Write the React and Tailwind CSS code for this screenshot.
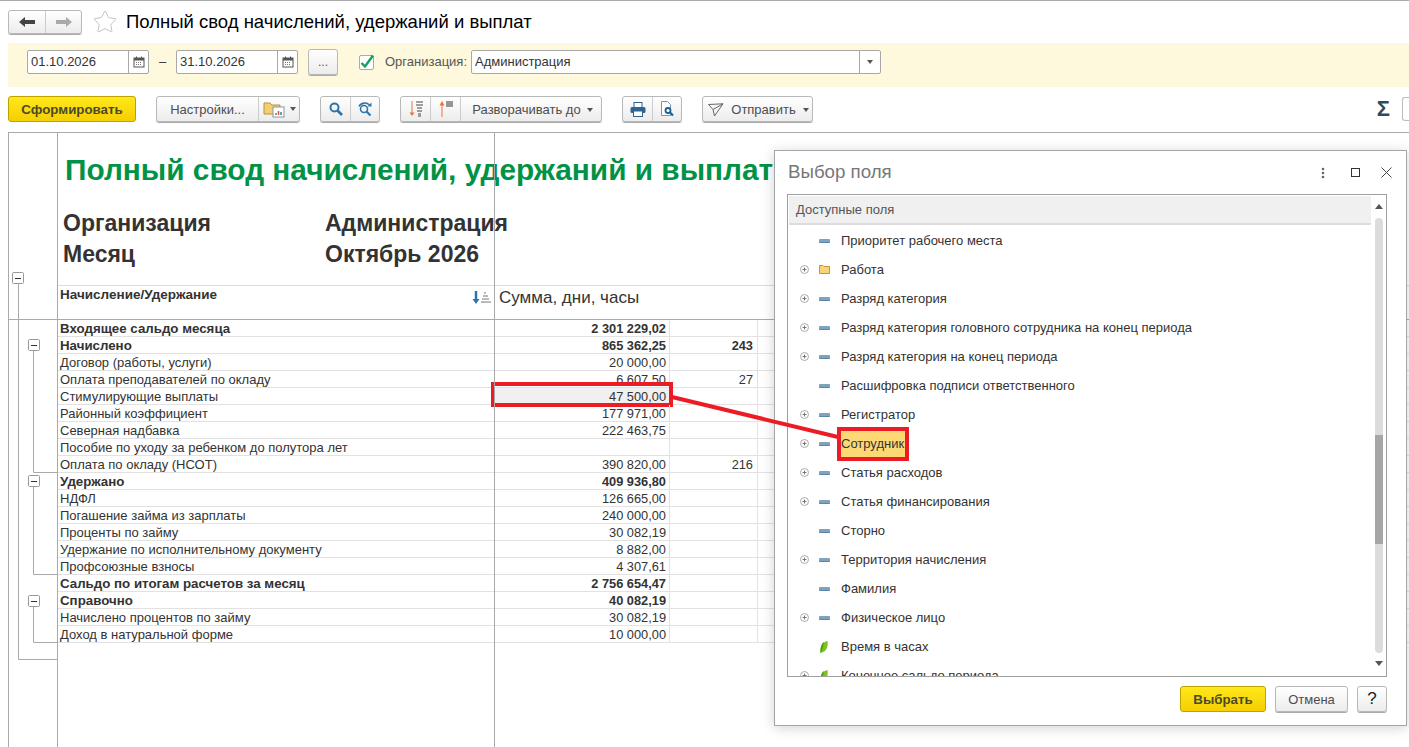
import React from 'react';
import { Star } from 'lucide-react';

const rows = [
  { name: 'Входящее сальдо месяца', sum: '2 301 229,02', bold: true },
  { name: 'Начислено', sum: '865 362,25', days: '243', bold: true },
  { name: 'Договор (работы, услуги)', sum: '20 000,00' },
  { name: 'Оплата преподавателей по окладу', sum: '6 607,50', days: '27' },
  { name: 'Стимулирующие выплаты', sum: '47 500,00', marked: true },
  { name: 'Районный коэффициент', sum: '177 971,00' },
  { name: 'Северная надбавка', sum: '222 463,75' },
  { name: 'Пособие по уходу за ребенком до полутора лет', sum: '' },
  { name: 'Оплата по окладу (НСОТ)', sum: '390 820,00', days: '216' },
  { name: 'Удержано', sum: '409 936,80', bold: true },
  { name: 'НДФЛ', sum: '126 665,00' },
  { name: 'Погашение займа из зарплаты', sum: '240 000,00' },
  { name: 'Проценты по займу', sum: '30 082,19' },
  { name: 'Удержание по исполнительному документу', sum: '8 882,00' },
  { name: 'Профсоюзные взносы', sum: '4 307,61' },
  { name: 'Сальдо по итогам расчетов за месяц', sum: '2 756 654,47', bold: true },
  { name: 'Справочно', sum: '40 082,19', bold: true },
  { name: 'Начислено процентов по займу', sum: '30 082,19' },
  { name: 'Доход в натуральной форме', sum: '10 000,00' },
];

const fields = [
  { name: 'Приоритет рабочего места', icon: 'dash' },
  { name: 'Работа', icon: 'folder', plus: true },
  { name: 'Разряд категория', icon: 'dash', plus: true },
  { name: 'Разряд категория головного сотрудника на конец периода', icon: 'dash', plus: true },
  { name: 'Разряд категория на конец периода', icon: 'dash', plus: true },
  { name: 'Расшифровка подписи ответственного', icon: 'dash' },
  { name: 'Регистратор', icon: 'dash', plus: true },
  { name: 'Сотрудник', icon: 'dash', plus: true, selected: true },
  { name: 'Статья расходов', icon: 'dash', plus: true },
  { name: 'Статья финансирования', icon: 'dash', plus: true },
  { name: 'Сторно', icon: 'dash' },
  { name: 'Территория начисления', icon: 'dash', plus: true },
  { name: 'Фамилия', icon: 'dash' },
  { name: 'Физическое лицо', icon: 'dash', plus: true },
  { name: 'Время в часах', icon: 'leaf' },
  { name: 'Конечное сальдо периода', icon: 'leaf', plus: true },
];

const btn = 'flex items-center justify-center border border-[#b8b8b8] rounded-[3px] bg-linear-to-b from-white to-[#ececec] shadow-[0_1px_0_#aaa] text-[#4d4d4d] text-[13px]';
const yellowBtn = 'flex items-center justify-center pt-[2px] border border-[#bfa200] rounded-[3px] bg-linear-to-b from-[#ffe81a] to-[#f5cf00] font-bold text-[#4a4a2a] text-[13.3px]';

function Caret() {
  return <span className="w-0 h-0 border-x-[3.5px] border-x-transparent border-t-[4px] border-t-[#555]" />;
}

function Calendar() {
  return (
    <svg width="12" height="12" viewBox="0 0 12 12">
      <rect x="1" y="2" width="10" height="9" fill="none" stroke="#555" />
      <rect x="1" y="2" width="10" height="2.5" fill="#555" />
      <path d="M3.5 0.5v3M8.5 0.5v3" stroke="#555" />
      <path d="M3 6.5h6M3 8.5h6" stroke="#777" strokeDasharray="1 1" />
    </svg>
  );
}

function DateField({ value }) {
  return (
    <div className="flex w-[122px] h-[24px] border border-[#a8a8a8] rounded-[2px] bg-white">
      <div className="flex-1 pl-[3px] text-[13px] leading-[22px] text-[#333]">{value}</div>
      <div className="w-[20px] border-l border-[#a8a8a8] flex items-center justify-center"><Calendar /></div>
    </div>
  );
}

function FolderReport() {
  return (
    <svg width="24" height="18" viewBox="0 0 24 18">
      <path d="M1 3h6l2 2h8v9H1z" fill="#f3cf72" stroke="#b8923a" />
      <rect x="10" y="7" width="11" height="10" fill="#fff" stroke="#8a9aa6" />
      <path d="M13 15v-2" stroke="#3a9a4a" strokeWidth="1.5" />
      <path d="M15.500 15v-4" stroke="#d0503a" strokeWidth="1.5" />
      <path d="M18 15v-3" stroke="#3a7ab0" strokeWidth="1.5" />
    </svg>
  );
}

function SortDown() {
  return (
    <svg width="16" height="18" viewBox="0 0 16 18">
      <path d="M4 1v14" stroke="#e8743a" />
      <path d="M1.500 12.500L4 16l2.500-3.500z" fill="#e8743a" />
      <path d="M8 2h7M8 5h7M9 8h5M9 11h5M10 14h3M10 16h3" stroke="#444" />
    </svg>
  );
}

function SortUp() {
  return (
    <svg width="16" height="18" viewBox="0 0 16 18">
      <path d="M4 3v14" stroke="#e8743a" />
      <path d="M1.500 5.500L4 1l2.500 4.500z" fill="#e8743a" />
      <path d="M8 2h7M8 4h7M8 6h7" stroke="#333" />
    </svg>
  );
}

function SearchBlue() {
  return (
    <svg width="14" height="14" viewBox="0 0 14 14" fill="none" stroke="#2f74a8" strokeWidth="2">
      <circle cx="5.500" cy="5.500" r="4" />
      <path d="M8.500 8.500L13 13" strokeWidth="2.600" />
    </svg>
  );
}

function RefreshSearch() {
  return (
    <svg width="16" height="16" viewBox="0 0 16 16" fill="none" stroke="#2f74a8" strokeWidth="1.6">
      <circle cx="7" cy="8" r="3.500" />
      <path d="M9.500 10.500L13.500 14.500" strokeWidth="2.200" />
      <path d="M2 5.500C4 1.500 9.500 1 12.500 4" />
      <path d="M14.500 1.500v4h-4z" fill="#2f74a8" stroke="none" />
    </svg>
  );
}

function PrinterFilled() {
  return (
    <svg width="16" height="15" viewBox="0 0 16 15">
      <rect x="4" y="0.500" width="8" height="5" fill="#fff" stroke="#2f648f" />
      <rect x="0.500" y="5" width="15" height="6" rx="1.500" fill="#2f648f" />
      <rect x="3.500" y="9" width="9" height="5.500" fill="#fff" stroke="#2f648f" />
    </svg>
  );
}

function PreviewDoc() {
  return (
    <svg width="15" height="16" viewBox="0 0 15 16" fill="none">
      <path d="M1.500 0.500h6l3 3v11h-9z" fill="#fff" stroke="#6a9ac0" />
      <circle cx="8" cy="9.500" r="2.500" stroke="#1f5f8f" strokeWidth="1.800" />
      <path d="M10 11.500l3 3" stroke="#1f5f8f" strokeWidth="2.200" />
    </svg>
  );
}

function Plane() {
  return (
    <svg width="16" height="14" viewBox="0 0 16 14" fill="none" stroke="#666">
      <path d="M0.500 1.500L15 0.800 6.500 13 5 6.500zM5 6.500L15 0.800" />
    </svg>
  );
}

function OutlineTree() {
  const box = (x, y) => (
    <g key={`${x}-${y}`}>
      <rect x={x + 0.5} y={y + 0.5} width="11" height="11" rx="1" fill="#fff" stroke="#999" />
      <path d={`M${x + 3} ${y + 6.500}h6`} stroke="#333" />
    </g>
  );
  return (
    <svg width="48" height="614" viewBox="9 133 48 614" className="block">
      <path d="M9 319.500H57" stroke="#aaa" />
      <path d="M18.500 284V659.500H57" fill="none" stroke="#aaa" />
      <path d="M33.500 351V472.500H57" fill="none" stroke="#aaa" />
      <path d="M33.500 487V574.500H57" fill="none" stroke="#aaa" />
      <path d="M33.500 606V642.500H57" fill="none" stroke="#aaa" />
      {box(12, 272)}
      {box(28, 339)}
      {box(28, 475)}
      {box(28, 595)}
    </svg>
  );
}

function ReportRow({ row }) {
  return (
    <div className={`flex h-[17px] border-b border-[#e2e2e2] text-[12.8px] leading-[18px] text-[#333] ${row.bold ? 'font-bold' : ''}`}>
      <div className={`w-[436px] pl-[2px] whitespace-nowrap ${row.bold ? 'text-[13.3px]' : 'text-[13px]'}`}>{row.name}</div>
      <div className={`relative w-[176px] border-r border-[#e2e2e2] pr-[3px] text-right ${row.marked ? 'bg-[#f0f0f0]' : ''}`}>
        {row.sum}
        {row.marked && <div className="absolute left-[-3px] right-[-4px] top-[-6px] h-[25px] border-4 border-[#ed1c24]" />}
      </div>
      <div className="w-[88px] border-r border-[#e2e2e2] pr-[4px] text-right">{row.days}</div>
      <div className="flex-1" />
    </div>
  );
}

function FieldIcon({ type }) {
  if (type === 'folder') {
    return (
      <svg width="11" height="9" viewBox="0 0 11 9">
        <path d="M0.500 0.500h3.500l1 1h5.500v7h-10z" fill="#f7d477" stroke="#c9962e" />
      </svg>
    );
  }
  if (type === 'leaf') {
    return (
      <svg width="8" height="12" viewBox="0 0 8 12">
        <path d="M0.500 12C0 6 2 1 7.500 0 8.500 6 6 11 0.500 12z" fill="#7cc21e" />
        <path d="M0.500 12C0 6 2 2 4 1 3 5 3 9 0.500 12z" fill="#4f9a12" />
      </svg>
    );
  }
  return <span className="block w-[11px] h-[4px] rounded-[1px] bg-[#7fa3bd] border-b border-[#5b86a6]" />;
}

function FieldRow({ field }) {
  return (
    <div className="flex items-center h-[29px] text-[13px] text-[#333] shrink-0">
      <div className="w-[25px] pl-[12px] flex items-center">
        {field.plus && (
          <svg width="9" height="9" viewBox="0 0 9 9">
            <circle cx="4.500" cy="4.500" r="4" fill="#fff" stroke="#aaa" />
            <path d="M2.500 4.500h4M4.500 2.500v4" stroke="#777" />
          </svg>
        )}
      </div>
      <div className="w-[22px] flex justify-center"><FieldIcon type={field.icon} /></div>
      {field.selected ? (
        <div className="ml-[2px] h-[34px] flex items-center w-[72px] bg-[#fdd975] border-4 border-[#ed1c24] whitespace-nowrap">{field.name}</div>
      ) : (
        <div className="ml-[6px] whitespace-nowrap">{field.name}</div>
      )}
    </div>
  );
}

function FieldDialog() {
  return (
    <div className="absolute left-[774px] top-[150px] w-[633px] h-[576px] bg-white border border-[#a6a6a6] shadow-[0_2px_12px_rgba(0,0,0,0.18)] flex flex-col">
      <div className="flex items-center h-[43px] shrink-0 pl-[13px]">
        <div className="text-[18.7px] text-[#777] flex-1">Выбор поля</div>
        <svg width="4" height="12" viewBox="0 0 4 12" fill="#666" className="mr-[26px]">
          <circle cx="2" cy="2" r="1.300" />
          <circle cx="2" cy="6" r="1.300" />
          <circle cx="2" cy="10" r="1.300" />
        </svg>
        <span className="block w-[9px] h-[9px] border border-[#333] mr-[21px]" />
        <svg width="11" height="11" viewBox="0 0 11 11" stroke="#444" className="mr-[14px]">
          <path d="M0.500 0.500l10 10M10.500 0.500l-10 10" />
        </svg>
      </div>
      <div className="ml-[12px] w-[600px] h-[483px] border border-[#a0a0a0] flex shrink-0 overflow-hidden">
        <div className="flex-1 flex flex-col overflow-hidden">
          <div className="mt-[1px] ml-[1px] h-[29px] shrink-0 bg-[#f0f0f0] border-b-2 border-[#dcdcdc] pl-[7px] text-[13px] leading-[27px] text-[#555]">Доступные поля</div>
          <div className="pt-[1px] flex flex-col">
            {fields.map(f => <FieldRow key={f.name} field={f} />)}
          </div>
        </div>
        <div className="w-[15px] shrink-0 flex flex-col items-center pt-[9px]">
          <span className="w-0 h-0 border-x-[4px] border-x-transparent border-b-[5px] border-b-[#555]" />
          <div className="mt-[9px] w-[8px] h-[435px] rounded-[4px] bg-[#dcdcdc] overflow-hidden pt-[217px]">
            <div className="h-[109px] bg-[#a6a6a6]" />
          </div>
          <span className="mt-[8px] w-0 h-0 border-x-[4px] border-x-transparent border-t-[5px] border-t-[#555]" />
        </div>
      </div>
      <div className="flex justify-end gap-[9px] mt-[9px] pr-[19px]">
        <div className={`${yellowBtn} w-[86px] h-[26px]`}>Выбрать</div>
        <div className={`${btn} w-[73px] h-[26px] pt-[2px]`}>Отмена</div>
        <div className={`${btn} w-[30px] h-[26px] !text-[17px] !text-[#222]`}>?</div>
      </div>
    </div>
  );
}

export default function App() {
  return (
    <div className="relative w-[1409px] h-[747px] overflow-hidden bg-white font-['Liberation_Sans',Arial,sans-serif]">
      {/* title bar */}
      <div className="flex items-center h-[43px] border-t border-[#aaa] pl-[8px]">
        <div className={`${btn} w-[74px] h-[24px]`}>
          <div className="w-[37px] flex justify-center border-r border-[#ccc] h-full items-center">
            <svg width="16" height="10" viewBox="0 0 16 10"><path d="M0 5l6-5v3h10v4H6v3z" fill="#444" /></svg>
          </div>
          <div className="flex-1 flex justify-center">
            <svg width="16" height="10" viewBox="0 0 16 10"><path d="M16 5l-6-5v3H0v4h10v3z" fill="#aaa" /></svg>
          </div>
        </div>
        <Star size={26} strokeWidth={0.9} color="#c0c0c0" className="ml-[10px]" />
        <div className="ml-[8px] text-[18.5px] text-black whitespace-nowrap">Полный свод начислений, удержаний и выплат</div>
      </div>

      {/* filter panel */}
      <div className="ml-[8px] h-[44px] bg-[#fef8dc] flex items-center pl-[19px] pb-[6px]">
        <DateField value="01.10.2026" />
        <div className="w-[27px] text-center text-[13px] text-[#333]">–</div>
        <DateField value="31.10.2026" />
        <div className={`${btn} ml-[10px] w-[30px] h-[26px] !text-[#555] !text-[12px]`}>...</div>
        <div className="ml-[21px] w-[15px] h-[15px] border border-[#aaa] rounded-[2px] bg-white flex items-center justify-center">
          <svg width="15" height="15" viewBox="0 0 15 15" fill="none" className="overflow-visible"><path d="M2.500 8l3.500 3.500L14 0.500" stroke="#12a05a" strokeWidth="2.400" /></svg>
        </div>
        <div className="ml-[11px] w-[86px] text-[13px] text-[#555] whitespace-nowrap">Организация:</div>
        <div className="flex w-[410px] h-[24px] border border-[#a8a8a8] rounded-[2px] bg-white">
          <div className="flex-1 pl-[3px] text-[13px] leading-[22px] text-[#333]">Администрация</div>
          <div className="w-[21px] border-l border-[#a8a8a8] flex items-center justify-center"><Caret /></div>
        </div>
      </div>

      {/* command bar */}
      <div className="flex items-center h-[26px] mt-[9px] pl-[8px]">
        <div className={`${yellowBtn} w-[128px] h-[26px]`}>Сформировать</div>
        <div className={`${btn} ml-[20px] w-[144px] h-[26px]`}>
          <div className="w-[102px] h-full flex items-center justify-center border-r border-[#ccc] pt-[2px]">Настройки...</div>
          <div className="flex-1 flex items-center pl-[4px] gap-[3px]"><FolderReport /><Caret /></div>
        </div>
        <div className={`${btn} ml-[20px] w-[60px] h-[26px]`}>
          <div className="w-[30px] h-full flex items-center justify-center border-r border-[#ccc]"><SearchBlue /></div>
          <div className="flex-1 flex justify-center"><RefreshSearch /></div>
        </div>
        <div className={`${btn} ml-[20px] w-[202px] h-[26px]`}>
          <div className="w-[30px] h-full flex items-center justify-center border-r border-[#ccc]"><SortDown /></div>
          <div className="w-[30px] h-full flex items-center justify-center border-r border-[#ccc]"><SortUp /></div>
          <div className="flex-1 flex items-center justify-center gap-[6px] whitespace-nowrap pl-[3px] pt-[2px]">Разворачивать до <Caret /></div>
        </div>
        <div className={`${btn} ml-[20px] w-[60px] h-[26px]`}>
          <div className="w-[30px] h-full flex items-center justify-center border-r border-[#ccc]"><PrinterFilled /></div>
          <div className="flex-1 flex justify-center"><PreviewDoc /></div>
        </div>
        <div className={`${btn} ml-[20px] w-[111px] h-[26px] gap-[7px] pl-[2px] pt-[2px]`}>
          <Plane /> Отправить <Caret />
        </div>
        <div className="flex-1 flex items-center justify-end">
          <div className="text-[22px] font-bold text-[#2f4a5f] leading-none mr-[12px]">Σ</div>
          <div className="w-[7px] h-[24px] border-l border-y border-[#bbb] rounded-l-[3px] bg-white" />
        </div>
      </div>

      {/* report */}
      <div className="flex mt-[10px] ml-[8px] h-[615px] border-t border-[#aaa]">
        <div className="w-[49px] border-l border-[#aaa] shrink-0"><OutlineTree /></div>
        <div className="relative flex-1 border-l border-[#aaa] flex flex-col">
          <div className="h-[153px] border-b border-[#dcdcdc] whitespace-nowrap">
            <div className="pt-[20px] pl-[7px] text-[29.8px] leading-[34px] font-bold text-[#009246]">Полный свод начислений, удержаний и выплат</div>
            <div className="mt-[21px] pl-[5px] flex text-[23px] leading-[31px] font-bold text-[#333]">
              <div className="w-[262px]">Организация</div>
              <div>Администрация</div>
            </div>
            <div className="pl-[5px] flex text-[23px] leading-[31px] font-bold text-[#333]">
              <div className="w-[262px]">Месяц</div>
              <div>Октябрь 2026</div>
            </div>
          </div>
          <div className="flex h-[34px] border-b border-[#aaa]">
            <div className="w-[436px] flex justify-between pl-[2px] pr-[2px]">
              <div className="text-[13.500px] font-bold text-[#333] leading-[16px] pt-[1px]">Начисление/Удержание</div>
              <svg width="20" height="14" viewBox="0 0 20 14" className="mt-[5px]">
                <path d="M4 0v9" stroke="#2f74a8" strokeWidth="2.500" />
                <path d="M0.500 8h7L4 13z" fill="#2f74a8" />
                <path d="M12 2h2M11 5h5M10 8h7M9 11h10" stroke="#777" />
              </svg>
            </div>
            <div className="pl-[5px] pt-[2px] text-[17px] leading-[20px] text-[#333]">Сумма, дни, часы</div>
          </div>
          {rows.map(r => <ReportRow key={r.name} row={r} />)}
          <div className="absolute left-[436px] top-0 bottom-0 w-px bg-[#aaa]" />
        </div>
      </div>

      <FieldDialog />

      {/* red callout from the cell to the field */}
      <svg width="1409" height="747" className="absolute left-0 top-0 pointer-events-none">
        <path d="M672 397L838 437" stroke="#ed1c24" strokeWidth="4" />
      </svg>
    </div>
  );
}
